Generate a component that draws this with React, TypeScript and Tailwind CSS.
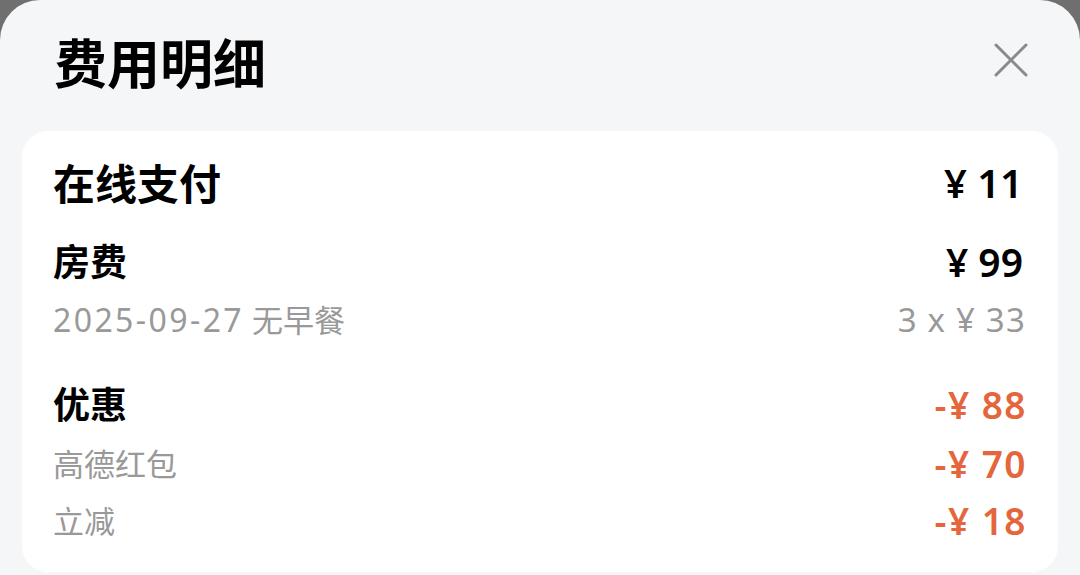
const font = {
  fontFamily: '"Noto Sans", Roboto, "Noto Sans CJK SC", sans-serif',
};

type Row = {
  label: string;
  date?: string;
  value: string;
  kind: "head" | "sub";
  accent?: boolean;
  h: string;
  mt: string;
};

const rows: Row[] = [
  { label: "房费", value: "¥ 99", kind: "head", h: "h-[44px]", mt: "mt-[33px]" },
  { label: "无早餐", date: "2025-09-27", value: "3 x ¥ 33", kind: "sub", h: "h-[40px]", mt: "mt-[16px]" },
  { label: "优惠", value: "-¥ 88", kind: "head", accent: true, h: "h-[44px]", mt: "mt-[43px]" },
  { label: "高德红包", value: "-¥ 70", kind: "sub", accent: true, h: "h-[40px]", mt: "mt-[17px]" },
  { label: "立减", value: "-¥ 18", kind: "sub", accent: true, h: "h-[40px]", mt: "mt-[17px]" },
];

function CloseIcon() {
  return (
    <svg width="34" height="34" viewBox="0 0 34 34" fill="none" stroke="#8a8a8a" strokeWidth="3" strokeLinecap="round">
      <path d="M2 2 L32 32 M32 2 L2 32" />
    </svg>
  );
}

export default function App() {
  return (
    <div className="w-[1080px] h-[575px] overflow-hidden bg-[#6f6f6f]" style={font}>
      <div className="h-full rounded-t-[40px] bg-[#f5f6f8] flex flex-col pb-[3px]">
        <div className="h-[126px] flex items-center justify-between pl-[54px] pr-[52px]">
          <h1 className="text-[53px] font-bold text-black leading-none">费用明细</h1>
          <div className="-mt-[6px]">
            <CloseIcon />
          </div>
        </div>

        <div className="mt-[5px] mx-[22px] flex-1 rounded-[26px] bg-white pt-[28px] pl-[31px] pr-[35px]">
          <div className="h-[48px] flex items-center justify-between">
            <span className="text-[42px] font-semibold text-black">在线支付</span>
            <span className="text-[40px] font-semibold text-black">¥ 11</span>
          </div>

          {rows.map((r) => (
            <div key={r.label} className={`${r.h} ${r.mt} flex items-center justify-between`}>
              {r.kind === "head" ? (
                <span className="text-[37px] font-bold text-black">{r.label}</span>
              ) : (
                <span className="text-[31px] text-[#999999]">
                  {r.date && <span className="text-[32px] tracking-[2.4px] mr-[8px]">{r.date}</span>}
                  {r.label}
                </span>
              )}
              <span
                className={
                  r.accent
                    ? "text-[37px] font-semibold tracking-[1.5px] -mr-[4px] text-[#e4663c]"
                    : r.kind === "head"
                    ? "text-[39px] font-semibold text-black"
                    : "text-[33px] tracking-[1.2px] -mr-[3px] text-[#999999]"
                }
              >
                {r.value}
              </span>
            </div>
          ))}
        </div>
      </div>
    </div>
  );
}
